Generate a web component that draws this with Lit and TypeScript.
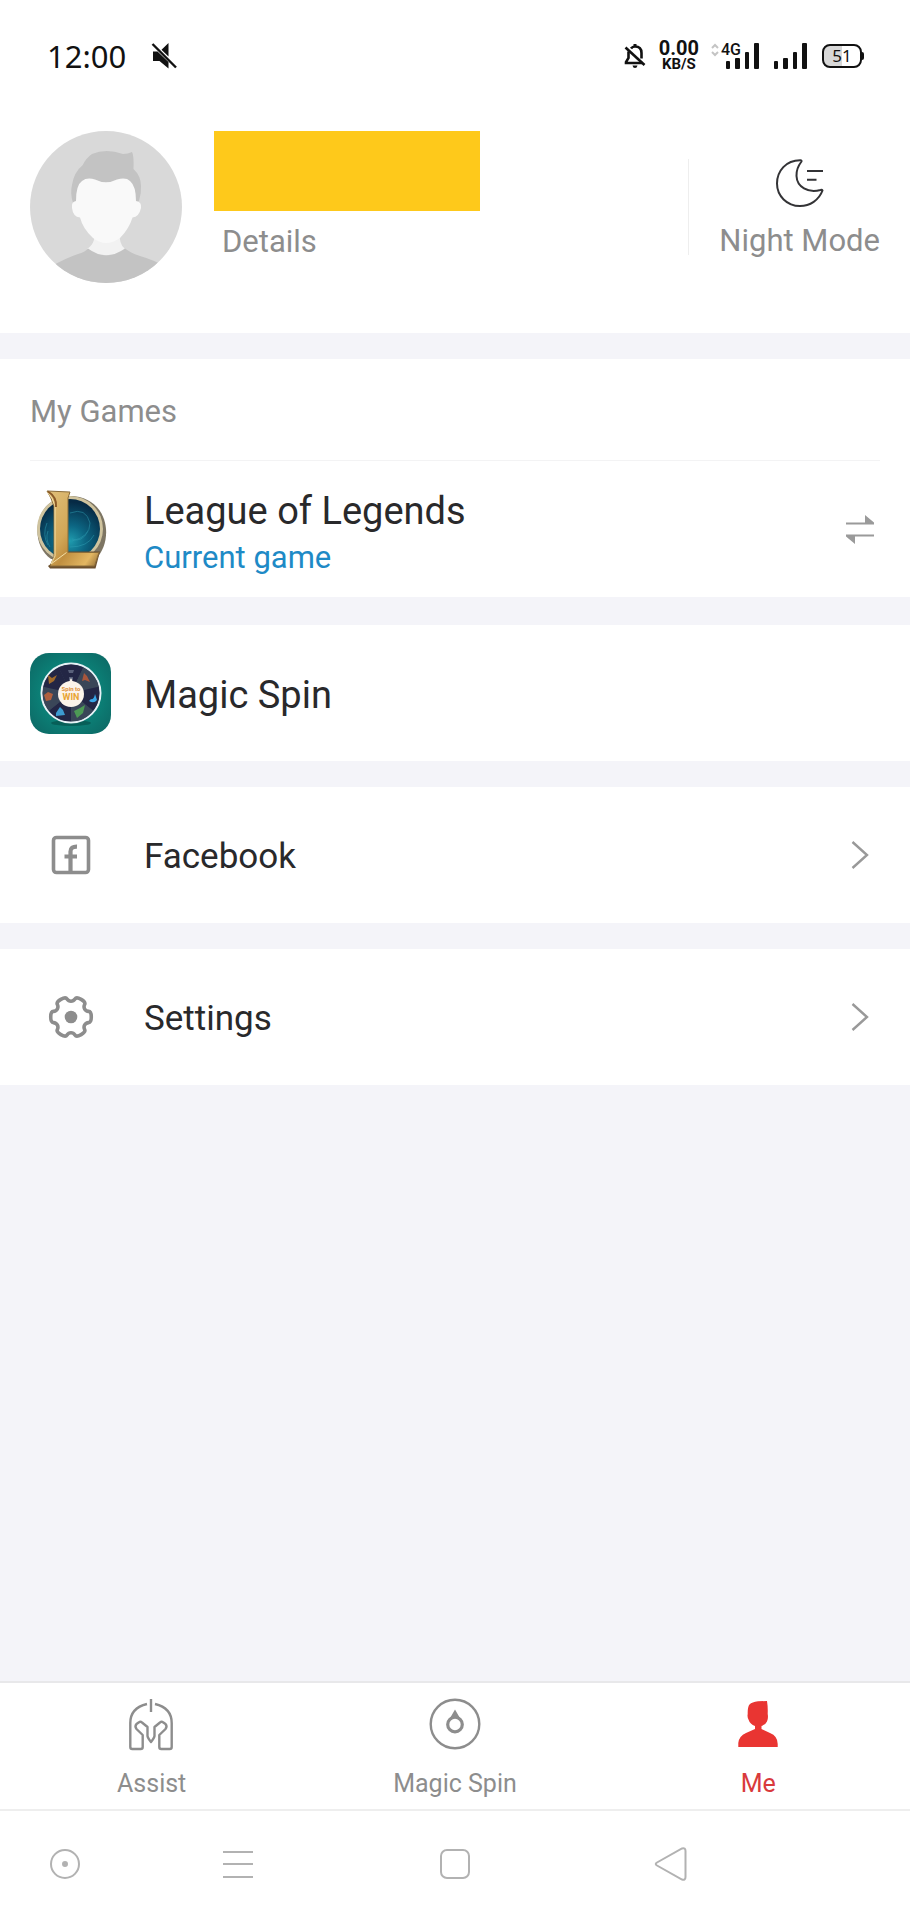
import { LitElement, html, css, svg } from "lit";
import { customElement, property, state } from "lit/decorators.js";
import { classMap } from "lit/directives/class-map.js";

// closed outline with six rounded lobes, centred on 0,0
function gearPath() {
  const points: number[][] = [];
  for (let lobe = 0; lobe < 6; lobe++) {
    for (const [angle, radius] of [
      [-15, 21],
      [15, 21],
      [21, 16],
      [39, 16],
    ]) {
      const a = ((lobe * 60 + angle) * Math.PI) / 180;
      points.push([radius * Math.cos(a), radius * Math.sin(a)]);
    }
  }
  const mid = (p: number[], q: number[]) =>
    `${((p[0] + q[0]) / 2).toFixed(2)},${((p[1] + q[1]) / 2).toFixed(2)}`;
  let d = `M${mid(points[points.length - 1], points[0])}`;
  points.forEach((p, i) => {
    const next = points[(i + 1) % points.length];
    d += ` Q${p[0].toFixed(2)},${p[1].toFixed(2)} ${mid(p, next)}`;
  });
  return d + "Z";
}

const icons = {
  mute: html`<svg width="26" height="28" viewBox="0 0 26 28" aria-hidden="true">
    <path d="M17.500 1v13.500L10.500 7.800zM2 9.500h4.500L17.500 20v6.500L8.500 19H2z" fill="#111" />
    <path d="M1.500 2L25 25.500" stroke="#111" stroke-width="2.400" />
  </svg>`,
  bell: html`<svg width="22" height="26" viewBox="0 0 22 26" aria-hidden="true">
    <g fill="none" stroke="#111" stroke-width="2.600">
      <path d="M7 5.500Q8.500 3.500 11 3.500Q17.500 3.500 17.500 10v5.500M4.500 8.500V15L2 19v1h16.500" />
      <path d="M1.500 4.500L20.500 22" />
    </g>
    <path d="M9.500 1h3v3h-3zM8.500 22.500h5Q13 25 11 25Q9 25 8.500 22.500z" fill="#111" />
  </svg>`,
  data: html`<svg width="8" height="14" viewBox="0 0 8 14" aria-hidden="true">
    <path d="M1 5L4 2l3 3M1 9l3 3 3-3" fill="none" stroke="#c4c4c4" stroke-width="2" />
  </svg>`,
  signal: html`<svg width="33" height="26" viewBox="0 0 33 26" aria-hidden="true">
    <g fill="#111">
      <rect x="0" y="18" width="4" height="8" rx="1" />
      <rect x="9" y="15" width="5" height="11" rx="1" />
      <rect x="19" y="9" width="4" height="17" rx="1" />
      <rect x="28" y="0" width="5" height="26" rx="1" />
    </g>
  </svg>`,
  avatar: html`<svg width="152" height="152" viewBox="0 0 152 152" aria-hidden="true">
    <defs><clipPath id="round"><circle cx="76" cy="76" r="76" /></clipPath></defs>
    <g clip-path="url(#round)">
      <rect width="152" height="152" fill="#d9d9d9" />
      <path d="M42.800 71Q40 62 42 54Q44 41 52.800 34Q56 27 62 23Q76 17 93 23Q98 23 102 21Q104 24 103.500 38Q111 45 111 55Q111.500 62 109 70L100 76H50z" fill="#c3c3c3" />
      <path d="M64 98V109Q62 115 57 118Q76 140 95 118Q89 114 89 98z" fill="#f2f2f2" />
      <path d="M46 70Q46 54 52 50Q57 46 65 48.500Q76 54 87 48.500Q96 46 100 50Q106 55 106 70Q112 71 111 77Q109 86 102.500 86.500Q99 98 90 107Q76 117 63 107Q53 98 50 86.500Q43 86 42 77Q41 71 46 70z" fill="#f9f9f9" />
      <path d="M20 136Q36 127 48 123Q55 121 58 117.500Q76 131 95 117.500Q101 122 110 125Q124 129 136 136V152H20z" fill="#c3c3c3" />
    </g>
  </svg>`,
  moon: html`<svg width="48" height="48" viewBox="0 0 48 48" aria-hidden="true">
    <g fill="none" stroke="#333336" stroke-width="2" stroke-linejoin="round" stroke-linecap="round">
      <path d="M24.500 1.200C10 1 1 12 1 24.500C1 37 11 47 24 47C34 47 43 41 46.500 31.500Q46 30.500 44.500 31C32 34.500 21 28 20.500 17C20.200 11 22 7 25.500 2.500Q25.800 1.300 24.500 1.200z" />
      <path d="M31 12H47M31 20.700H40.500" stroke-linecap="butt" />
    </g>
  </svg>`,
  league: html`<svg width="81" height="81" viewBox="0 0 81 81" aria-hidden="true">
    <defs>
      <linearGradient id="gold" x1="0" y1="0" x2="1" y2="1">
        <stop offset="0" stop-color="#e0c07a" />
        <stop offset="0.450" stop-color="#d2a757" />
        <stop offset="0.600" stop-color="#c08f40" />
        <stop offset="0.850" stop-color="#e3b762" />
        <stop offset="1" stop-color="#8f6a34" />
      </linearGradient>
      <radialGradient id="deep" cx="0.500" cy="0.700" r="0.650">
        <stop offset="0" stop-color="#1f9bae" />
        <stop offset="0.400" stop-color="#0c6683" />
        <stop offset="1" stop-color="#062a45" />
      </radialGradient>
    </defs>
    <path d="M21 70C-2 54 4 8 40 7C76 7 86 48 66 70z" fill="#7d7563" />
    <circle cx="40" cy="40" r="33" fill="#cfc39e" />
    <circle cx="40" cy="40" r="30" fill="url(#deep)" />
    <g fill="none" stroke="#2f9fb4" stroke-width="1" opacity="0.500">
      <path d="M40 24Q56 18 60 34Q60 48 42 52M40 58Q58 58 64 46M42 50Q52 54 58 42" />
      <path d="M17 34Q12 46 18 56M18 42Q15 50 20 58" />
    </g>
    <path d="M38 62.500H70L65.500 79.500H20L18 77z" fill="#6b4e2c" />
    <path d="M17 2L40 3L38 9V63.500H69L64.500 77H20L24 68V17Q21 8 17 2z" fill="url(#gold)" stroke="#8a6c3a" />
    <path d="M17.500 3Q23 9 25 17V67L21 75L36.500 63.500" fill="none" stroke="#f3dfa6" stroke-width="1" />
    <path d="M18 2.500Q27 8 26 18" fill="none" stroke="#8a5a28" stroke-width="2" />
  </svg>`,
  wheel: html`<svg width="81" height="81" viewBox="0 0 81 81" aria-hidden="true">
    <defs>
      <radialGradient id="felt" cx="0.500" cy="0.500" r="0.700">
        <stop offset="0.400" stop-color="#0b877c" />
        <stop offset="1" stop-color="#0d6562" />
      </radialGradient>
    </defs>
    <rect width="81" height="81" rx="19" fill="url(#felt)" />
    <ellipse cx="41" cy="70" rx="20" ry="3" fill="#075f58" />
    <circle cx="41" cy="40" r="29.500" fill="#39435a" stroke="#e6f2f6" stroke-width="2" />
    ${[0, 1, 2, 3, 4, 5, 6].map(
      (n) => svg`<path
        d="M41 40L28.700 14.500A28.300 28.300 0 0 1 53.300 14.500z"
        fill=${n % 2 ? "#3a4658" : "#232645"}
        transform="rotate(${(n * 360) / 7} 41 40)" />`
    )}
    <path d="M18 22l4 3 5-3-3 6-5 3z" fill="#a06a2a" />
    <path d="M38 17h6l-1 3h-4zM39 24h4v3h-4z" fill="#59607a" />
    <path d="M54 20l3 3 3 6-5-2-3 1z" fill="#a8563c" />
    <path d="M61 46q3 1 4-5l2 6q-3 4-8 1z" fill="#38a6e8" />
    <path d="M14 42l4-3 5 2-2 6-5 1z" fill="#b0603f" />
    <path d="M26 60l4-6 3 3 2 5-9 1z" fill="#3d9bd0" />
    <path d="M44 58l6-3 5-3-2 8-6 5z" fill="#4d9a55" />
    <path d="M41 25l3 6h-6z" fill="#fbf3ea" />
    <circle cx="41" cy="41" r="13" fill="#fbf3ea" />
    <text class="wheel-top" x="41" y="38" text-anchor="middle">Spin to</text>
    <text class="wheel-win" x="41" y="47" text-anchor="middle">WIN</text>
  </svg>`,
  facebook: html`<svg width="44" height="44" viewBox="0 0 44 44" aria-hidden="true">
    <g fill="none" stroke="#8d8d8d">
      <rect x="4.500" y="4.500" width="35" height="35" rx="3" stroke-width="3.600" />
      <path d="M21.500 39V18.500Q21.500 13.500 28 13.700M15.500 23.500H28" stroke-width="4.200" />
    </g>
  </svg>`,
  settings: html`<svg width="46" height="46" viewBox="-23 -23 46 46" aria-hidden="true">
    <path d=${gearPath()} fill="none" stroke="#8d8d8d" stroke-width="3.600" />
    <circle r="6.300" fill="#8d8d8d" />
  </svg>`,
  swap: html`<svg width="28" height="30" viewBox="0 0 28 30" aria-hidden="true">
    <path d="M0 8.500H19V1L28 8.500V10.500H0zM28 20.500V22.500H9V30L0 22.500V20.500z" fill="#9a9a9a" />
  </svg>`,
  chevron: html`<svg width="18" height="30" viewBox="0 0 18 30" aria-hidden="true">
    <path d="M1.500 2L16 15L1.500 28" fill="none" stroke="#999" stroke-width="2.400" />
  </svg>`,
  helmet: html`<svg width="48" height="56" viewBox="1 0 48 56" aria-hidden="true">
    <g fill="none" stroke="#8d8d8d" stroke-width="2.400" stroke-linejoin="round">
      <path d="M24 3V16" />
      <path d="M20 8Q3.300 12 3.300 27V51Q3.300 53 5.300 53H13.700Q15.700 53 15.700 51V39L9.500 33Q7.500 30.500 9.500 28L12 26.200Q13.500 25 15 26.500L20.500 31V40Q20.800 42 24 46Q27.200 42 27.500 40V31L33 26.500Q34.500 25 36 26.200L38.500 28Q40.500 30.500 38.500 33L32.300 39V51Q32.300 53 34.300 53H42.700Q44.700 53 44.700 51V27Q44.700 12 28 8" />
    </g>
  </svg>`,
  spin: html`<svg width="52" height="56" viewBox="0 0 52 56" aria-hidden="true">
    <circle cx="26" cy="28" r="24.300" fill="none" stroke="#8d8d8d" stroke-width="2.400" />
    <circle cx="26" cy="28.500" r="7.300" fill="none" stroke="#8d8d8d" stroke-width="3.200" />
    <path d="M26 13.500L31.500 23Q26 19 20.500 23z" fill="#8d8d8d" />
  </svg>`,
  person: html`<svg width="48" height="56" viewBox="0 0 48 56" aria-hidden="true">
    <path d="M4.300 51V47Q5 40 12 37L21 33V30Q16 28 14.700 24Q13 21 13.700 18Q13.500 11 15.500 8.500Q18 6 24 5.300L33 5Q34 11 33.700 18Q34.500 22 33 25.500Q31.500 29 27.500 30V33L36 37Q43.700 40 43.700 48V51z" fill="#e93532" />
  </svg>`,
};

@customElement("list-row")
export class ListRow extends LitElement {
  @property() icon = "";
  @property() label = "";
  @property() note = "";
  @property() action = "";
  @property({ type: Boolean }) small = false;

  static styles = css`
    :host {
      display: block;
    }

    .row {
      display: flex;
      align-items: center;
      gap: 33px;
      width: 100%;
      min-height: 136px;
      padding: 0 30px;
      box-sizing: border-box;
      border: none;
      background: #fff;
      font: inherit;
      text-align: left;
      color: #29292b;
      cursor: pointer;
    }

    .icon {
      display: flex;
      justify-content: center;
      flex: 0 0 81px;
    }

    .text {
      flex: 1;
      padding-top: 3px;
      font-size: 38px;
      line-height: 48px;
    }

    .text.small {
      font-size: 35px;
    }

    .text.noted {
      padding-top: 9px;
    }

    .note {
      display: block;
      font-size: 31px;
      line-height: 46px;
      color: #1e8ac6;
    }

    .action {
      display: flex;
      justify-content: center;
      flex: 0 0 40px;
    }

    .wheel-top {
      font-size: 6px;
      font-weight: 700;
      fill: #e0913a;
    }

    .wheel-win {
      font-size: 9px;
      font-weight: 700;
      fill: #e8a331;
    }
  `;

  render() {
    const classes = { text: true, noted: !!this.note, small: this.small };
    return html`<button class="row" type="button">
      <span class="icon">${icons[this.icon]}</span>
      <span class=${classMap(classes)}>
        ${this.label}
        ${this.note ? html`<span class="note">${this.note}</span>` : ""}
      </span>
      ${this.action ? html`<span class="action">${icons[this.action]}</span>` : ""}
    </button>`;
  }
}

@customElement("status-bar")
export class StatusBar extends LitElement {
  static styles = css`
    :host {
      display: flex;
      align-items: center;
      height: 111px;
      padding: 0 46px 0 47px;
      color: #111;
    }

    .time {
      flex: 1;
      display: flex;
      align-items: center;
      gap: 25px;
      font-family: "Noto Sans", sans-serif;
      font-size: 31px;
    }

    .speed {
      display: flex;
      flex-direction: column;
      align-items: center;
      margin: 0 12px 0 13px;
      font-size: 20px;
      line-height: 17px;
      font-weight: 700;
    }

    .unit {
      font-size: 15px;
      line-height: 15px;
    }

    .mobile {
      display: flex;
      margin-right: 15px;
      position: relative;
    }

    .mobile svg:last-child {
      margin-left: 7px;
    }

    .network {
      position: absolute;
      left: 10px;
      top: 0;
      font-size: 16px;
      line-height: 14px;
      font-weight: 500;
    }

    .battery {
      position: relative;
      margin: 0 2px 0 15px;
      width: 40px;
      height: 24px;
      box-sizing: border-box;
      border: 2px solid #111;
      border-radius: 8px;
      background: linear-gradient(90deg, #d8d8d8 50%, #fff 50%);
      font-family: "Noto Sans", sans-serif;
      font-size: 17px;
      line-height: 20px;
      text-align: center;
    }

    .battery::after {
      content: "";
      position: absolute;
      right: -4px;
      top: 6px;
      width: 3px;
      height: 8px;
      border-radius: 0 2px 2px 0;
      background: #111;
    }
  `;

  render() {
    return html`
      <div class="time"><span>12:00</span>${icons.mute}</div>
      ${icons.bell}
      <div class="speed"><span>0.00</span><span class="unit">KB/S</span></div>
      <div class="mobile">
        ${icons.data}<span class="network">4G</span>${icons.signal}
      </div>
      ${icons.signal}
      <div class="battery">51</div>
    `;
  }
}

@customElement("app-root")
export class AppRoot extends LitElement {
  @state() tab = "me";

  tabs = [
    { id: "assist", label: "Assist", icon: icons.helmet },
    { id: "spin", label: "Magic Spin", icon: icons.spin },
    { id: "me", label: "Me", icon: icons.person },
  ];

  static styles = css`
    :host {
      display: flex;
      flex-direction: column;
      min-height: 100vh;
      background: #f4f4f9;
      font-family: Roboto, sans-serif;
      color: #29292b;
    }

    button {
      border: none;
      padding: 0;
      background: none;
      font: inherit;
      color: inherit;
      cursor: pointer;
    }

    .top {
      background: #fff;
    }

    .profile {
      display: flex;
      align-items: center;
      padding: 20px 30px 50px;
    }

    .avatar {
      display: flex;
    }

    .who {
      flex: 1;
      align-self: flex-start;
      margin-left: 32px;
    }

    .name {
      width: 266px;
      height: 80px;
      background: #fec91b;
    }

    .details {
      display: inline-block;
      margin-top: 11px;
      padding-left: 8px;
      font-size: 31px;
      line-height: 40px;
      color: #8d8d8d;
      text-decoration: none;
    }

    .night {
      display: flex;
      flex-direction: column;
      align-items: center;
      gap: 20px;
      padding-left: 30px;
      border-left: 1px solid #eee;
      font-size: 31px;
      line-height: 28px;
      color: #8d8d8d;
    }

    main {
      flex: 1;
      display: flex;
      flex-direction: column;
      gap: 26px;
      padding: 26px 0;
    }

    .games {
      margin-bottom: 2px;
      background: #fff;
    }

    .games h2 {
      margin: 0 30px;
      padding: 33px 0 28px;
      border-bottom: 1px solid #f3f3f4;
      font-size: 31px;
      line-height: 40px;
      font-weight: 400;
      color: #8d8d8d;
    }

    .tabs {
      display: grid;
      grid-template-columns: repeat(3, 1fr);
      background: #fff;
      border-top: 2px solid #e8e8ea;
    }

    .tab {
      display: flex;
      flex-direction: column;
      align-items: center;
      gap: 17px;
      padding: 13px 0 10px;
      font-size: 25px;
      line-height: 30px;
      color: #8d8d8d;
    }

    .tab.active {
      color: #d93a3c;
    }

    .system {
      display: grid;
      grid-template-columns: 130px repeat(3, 1fr) 130px;
      place-items: center;
      padding: 35px 0 38px;
      background: #fff;
      border-top: 2px solid #eee;
    }

    .system button {
      display: flex;
    }

    .system svg {
      fill: none;
      stroke: #b2b2b2;
      stroke-width: 2;
    }
  `;

  render() {
    return html`
      <header class="top">
        <status-bar></status-bar>
        <div class="profile">
          <div class="avatar">${icons.avatar}</div>
          <div class="who">
            <div class="name"></div>
            <a class="details" href="#details">Details</a>
          </div>
          <button class="night" type="button">${icons.moon}Night Mode</button>
        </div>
      </header>
      <main>
        <section class="games">
          <h2>My Games</h2>
          <list-row
            icon="league"
            label="League of Legends"
            note="Current game"
            action="swap"
          ></list-row>
        </section>
        <list-row icon="wheel" label="Magic Spin"></list-row>
        <list-row small icon="facebook" label="Facebook" action="chevron"></list-row>
        <list-row small icon="settings" label="Settings" action="chevron"></list-row>
      </main>
      <nav class="tabs">
        ${this.tabs.map(
          (tab) => html`<button
            type="button"
            class=${classMap({ tab: true, active: tab.id === this.tab })}
            @click=${() => (this.tab = tab.id)}
          >
            ${tab.icon}${tab.label}
          </button>`
        )}
      </nav>
      ${this.renderSystem()}
    `;
  }

  renderSystem() {
    return html`<nav class="system">
      <button type="button" aria-label="Assistive ball">
        <svg width="36" height="36" viewBox="0 0 36 36">
          <circle cx="18" cy="18" r="14" />
          <circle cx="18" cy="18" r="2" fill="#b2b2b2" />
        </svg>
      </button>
      <button type="button" aria-label="Recent apps">
        <svg width="36" height="36" viewBox="0 0 36 36">
          <path d="M3 6H33M3 18H33M3 31H33" />
        </svg>
      </button>
      <button type="button" aria-label="Home">
        <svg width="36" height="36" viewBox="0 0 36 36">
          <rect x="4" y="4" width="28" height="28" rx="6" />
        </svg>
      </button>
      <button type="button" aria-label="Back">
        <svg width="36" height="36" viewBox="0 0 36 36">
          <path d="M3 16.500L28 2.500Q31.500 1.500 31.500 5V31Q31.500 34.500 28 33.500L3 19.500Q0.500 18 3 16.500z" />
        </svg>
      </button>
    </nav>`;
  }
}
